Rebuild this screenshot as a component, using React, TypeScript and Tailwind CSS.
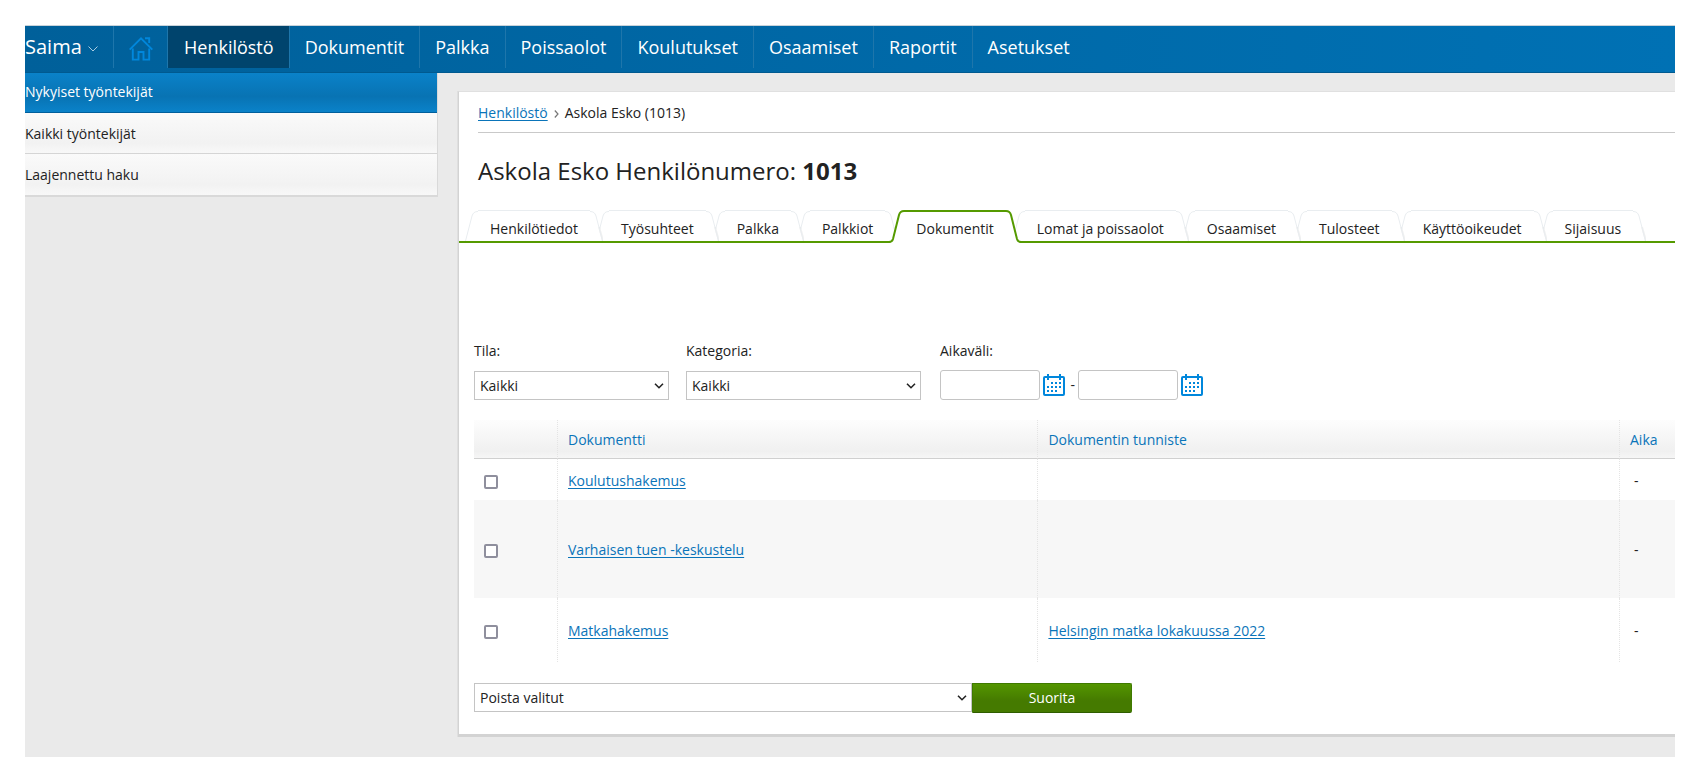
import React from "react";

const navItems = ["Dokumentit", "Palkka", "Poissaolot", "Koulutukset", "Osaamiset", "Raportit", "Asetukset"];

const tabs = [
  "Henkilötiedot",
  "Työsuhteet",
  "Palkka",
  "Palkkiot",
  "Dokumentit",
  "Lomat ja poissaolot",
  "Osaamiset",
  "Tulosteet",
  "Käyttöoikeudet",
  "Sijaisuus",
];

const rows = [
  { name: "Koulutushakemus", tag: "", time: "-", height: "h-[41px]" },
  { name: "Varhaisen tuen -keskustelu", tag: "", time: "-", height: "h-[98px]" },
  { name: "Matkahakemus", tag: "Helsingin matka lokakuussa 2022", time: "-", height: "h-16" },
];

function HomeIcon() {
  return (
    <svg width="24" height="24" viewBox="0 0 24 24" fill="none" stroke="#0087dc" strokeWidth="1.9" aria-hidden="true">
      <path d="M0.7 12.7 12 1.4 23.3 12.7" />
      <path d="M3.8 11.5V22.600H9.500V15H14.500V22.600H20.200V11.500" />
      <path d="M16 1.200H20.200V6" />
    </svg>
  );
}

function CalendarIcon() {
  const dots = [
    [8, 8], [12, 8], [16, 8],
    [4, 12], [8, 12], [12, 12], [16, 12],
    [4, 16], [8, 16], [12, 16],
  ];
  return (
    <svg width="22" height="22" viewBox="0 0 22 22" aria-hidden="true">
      <rect x="1" y="3" width="20" height="18" rx="1" fill="none" stroke="#0087dc" strokeWidth="2" />
      <path d="M5 0V6M17 0V6" stroke="#0087dc" strokeWidth="2" />
      {dots.map(([x, y]) => (
        <rect key={x + "-" + y} x={x} y={y} width="2" height="2" fill="#0087dc" />
      ))}
    </svg>
  );
}

function TabCap({ active, flip }: { active: boolean; flip: boolean }) {
  return active ? (
    <svg width="15" height="33" viewBox="0 0 15 33" className="shrink-0" aria-hidden="true">
      <g transform={flip ? "translate(15 0) scale(-1 1)" : undefined}>
        <path d="M0 33C3 32 3.500 31 4 29L10 6C11 2.500 12 1 15 1V33Z" fill="#fff" />
        <path d="M0 32C2.600 32 3.400 31 4 29L10 5C10.800 2 12 1 15 1" fill="none" stroke="#559a00" strokeWidth="2" />
      </g>
    </svg>
  ) : (
    <svg width="13" height="31" viewBox="0 0 13 31" className="shrink-0" aria-hidden="true">
      <g transform={flip ? "translate(13 0) scale(-1 1)" : undefined}>
        <path d="M0.500 31L7 6C8 3 9.500 1.500 13 1.500V31Z" fill="#fff" />
        {flip && <path d="M0 31L4 17" stroke="#000" strokeOpacity="0.06" strokeWidth="2" />}
        <path d="M0.500 31L7 6C8 3 9.500 1.500 13 1.500" fill="none" stroke="#e9edf0" strokeWidth="1" />
      </g>
    </svg>
  );
}

function Select({ id, label, options, className }: { id: string; label?: string; options: string[]; className: string }) {
  return (
    <span className={"relative inline-flex h-[29px] " + className}>
      <select id={id} aria-label={label} className="h-full w-full appearance-none border border-[#c4c4c4] bg-white pl-[5px] pr-6 text-sm text-[#222]">
        {options.map((o) => (
          <option key={o}>{o}</option>
        ))}
      </select>
      <svg width="10" height="6" viewBox="0 0 10 6" className="pointer-events-none absolute right-[5px] top-3" aria-hidden="true">
        <path d="M1 0.800 5 4.700 9 0.800" fill="none" stroke="#222" strokeWidth="1.600" />
      </svg>
    </span>
  );
}

const link = "text-[#0a74b9] underline underline-offset-2";

export default function App() {
  return (
    <div className="bg-white p-[25px] font-['Open_Sans',sans-serif] text-sm leading-5 text-[#222]">
      <div className="overflow-hidden bg-[#eaeaea] pb-5">
        <nav className="flex h-12 items-start border-t border-b border-t-[#c9d3da] border-b-[#005a90] bg-linear-to-r from-[#00609a] to-[#0071b4] text-lg text-white">
          <button className="flex h-[42px] w-[89px] items-center gap-[6px] border-r border-[#1e76ab] text-xl leading-7">
            Saima
            <svg width="10" height="6" viewBox="0 0 10 6" className="mt-1" aria-hidden="true">
              <path d="M0.500 0.500 5 5 9.500 0.500" fill="none" stroke="#a9cbe0" strokeWidth="1" />
            </svg>
          </button>
          <a href="#koti" aria-label="Etusivu" className="flex h-[42px] w-[54px] items-center justify-center border-r border-[#1e76ab] pt-1">
            <HomeIcon />
          </a>
          <a href="#henkilosto" className="flex h-[42px] items-center border-r border-[#1e76ab] bg-[#00446d] pl-4 pr-[15px]">
            Henkilöstö
          </a>
          {navItems.map((item) => (
            <a key={item} href="#osio" className="flex h-[42px] items-center border-r border-[#1e76ab] px-[15px] last:border-r-0">
              {item}
            </a>
          ))}
        </nav>

        <div className="flex items-start">
          <aside className="w-[413px] shrink-0 border-r border-b-2 border-[#d9d9d9]">
            <a href="#nykyiset" className="flex h-10 items-center border-b border-[#005f9c] bg-linear-to-b from-[#0a82c9] via-[#0873b3] via-60% to-[#0a82c9] pb-[2px] text-white">
              Nykyiset työntekijät
            </a>
            <a href="#kaikki" className="flex h-[41px] items-center border-b border-[#d5d5d5] bg-linear-to-b from-[#fafafa] via-[#f2f2f2] via-75% to-[#f8f8f8] pt-[2px]">
              Kaikki työntekijät
            </a>
            <a href="#haku" className="flex h-[41px] items-center bg-linear-to-b from-[#fafafa] via-[#f2f2f2] via-75% to-[#f8f8f8]">
              Laajennettu haku
            </a>
          </aside>

          <main className="ml-5 mt-[18px] min-w-0 flex-1 border-t border-b-3 border-l border-t-[#e0e0e0] border-b-[#d3d3d3] border-l-[#d3d3d3] bg-white pb-[21px] shadow-[-1px_0_0_#dfdfdf]">
            <div className="ml-[19px] border-b border-[#c9c9c9] pb-[9px] pt-[11px]">
              <a href="#henkilosto" className={link}>Henkilöstö</a>
              <svg width="5" height="8" viewBox="0 0 5 8" className="mx-[6px] inline" aria-hidden="true">
                <path d="M0.800 0.500 4 4 0.800 7.500" fill="none" stroke="#777" strokeWidth="1.200" />
              </svg>
              Askola Esko (1013)
            </div>
            <h1 className="ml-[19px] mt-[22px] text-2xl leading-8">
              Askola Esko Henkilönumero: <b>1013</b>
            </h1>

            <div role="tablist" className="mt-[23px] flex items-start border-b-2 border-[#559a00] pl-[13px]">
              {tabs.map((tab, i) => {
                const active = tab === "Dokumentit";
                return (
                  <button
                    key={tab}
                    role="tab"
                    aria-selected={active}
                    style={{ zIndex: active ? 20 : 10 - i }}
                    className={"relative flex " + (active ? "-mb-[2px] -ml-[9px] -mr-[2px] h-[33px]" : "-ml-[7px] h-[31px]")}
                  >
                    <TabCap active={active} flip={false} />
                    <span
                      className={
                        "flex h-full whitespace-nowrap bg-white px-3 " +
                        (active ? "border-t-2 border-[#559a00] pt-[7px]" : "border-t border-[#e9edf0] pt-2")
                      }
                    >
                      {tab}
                    </span>
                    <TabCap active={active} flip />
                  </button>
                );
              })}
            </div>

            <div className="ml-[15px] mt-[98px] flex gap-[17px]">
              <div className="flex flex-col gap-[10px]">
                <label htmlFor="tila">Tila:</label>
                <Select id="tila" options={["Kaikki"]} className="w-[195px]" />
              </div>
              <div className="flex flex-col gap-[10px]">
                <label htmlFor="kategoria">Kategoria:</label>
                <Select id="kategoria" options={["Kaikki"]} className="w-[235px]" />
              </div>
              <div className="ml-[2px] flex flex-col gap-[9px]">
                <label htmlFor="alku">Aikaväli:</label>
                <div className="flex items-center gap-[3px]">
                  <input id="alku" type="text" className="h-[30px] w-[100px] rounded-[3px] border border-[#c4c4c4] bg-white px-2" />
                  <button aria-label="Valitse alkupäivä"><CalendarIcon /></button>
                  <span className="w-[7px] text-right">-</span>
                  <input aria-label="Loppupäivä" type="text" className="h-[30px] w-[100px] rounded-[3px] border border-[#c4c4c4] bg-white px-2" />
                  <button aria-label="Valitse loppupäivä"><CalendarIcon /></button>
                </div>
              </div>
            </div>

            <div className="ml-[15px] mt-5">
              <table className="w-full table-fixed border-separate border-spacing-0 text-left">
                <colgroup>
                  <col className="w-[83px]" />
                  <col className="w-[40%]" />
                  <col />
                  <col className="w-14" />
                </colgroup>
                <thead>
                  <tr className="h-[39px] bg-linear-to-b from-[#fdfdfd] via-[#f0f0f0] via-80% to-[#f7f7f7] text-[#0a74b9]">
                    <td className="border-b border-[#d0d0d0]" />
                    {["Dokumentti", "Dokumentin tunniste", "Aika"].map((h) => (
                      <th key={h} scope="col" className="border-b border-l border-b-[#d0d0d0] border-l-[#e4e4e4] pl-[10px] pt-[2px] font-normal [border-left-style:dotted]">
                        {h}
                      </th>
                    ))}
                  </tr>
                </thead>
                <tbody>
                  {rows.map((r) => (
                    <tr key={r.name} className={r.height + " even:bg-[#f7f7f7]"}>
                      <td className="pl-[10px] pt-1">
                        <input
                          type="checkbox"
                          aria-label={r.name}
                          className="block size-[14px] appearance-none rounded-[2px] border-2 border-[#8f8f9d] bg-white"
                        />
                      </td>
                      <td className="border-l border-dotted border-[#e4e4e4] pl-[10px] pt-[2px]">
                        <a href="#dokumentti" className={link}>{r.name}</a>
                      </td>
                      <td className="border-l border-dotted border-[#e4e4e4] pl-[10px] pt-[2px]">
                        {r.tag && <a href="#tunniste" className={link}>{r.tag}</a>}
                      </td>
                      <td className="border-l border-dotted border-[#e4e4e4] pl-[14px] pt-[2px]">{r.time}</td>
                    </tr>
                  ))}
                </tbody>
              </table>
            </div>

            <div className="ml-[15px] mt-[21px] flex">
              <Select id="toiminto" label="Toiminto" options={["Poista valitut"]} className="w-[498px]" />
              <button className="h-[30px] w-40 rounded-r-[2px] border border-[#3f7a00] border-b-[#2f5d00] bg-linear-to-b from-[#549600] to-[#457a00] to-60% text-white">
                Suorita
              </button>
            </div>
          </main>
        </div>
      </div>
    </div>
  );
}
